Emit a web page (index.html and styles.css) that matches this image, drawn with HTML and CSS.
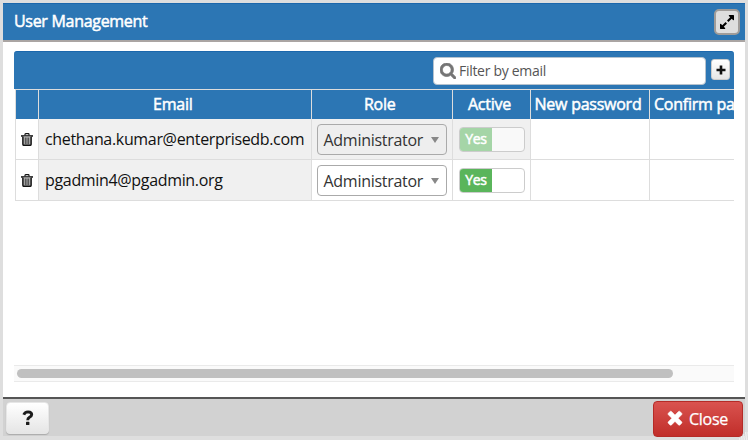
FILE: index.html
```html
<!DOCTYPE html>
<html lang="en">
<head>
<meta charset="utf-8">
<title>User Management</title>
<link rel="stylesheet" href="styles.css">
</head>
<body>
<svg width="0" height="0" class="defs">
  <symbol id="trash" viewBox="0 0 12 13"><path d="M4 2.200V1.400Q4 .7 4.700 .7H7.300Q8 .7 8 1.400V2.200" fill="none" stroke="#111" stroke-width="1.200"/><path d="M0 2.200H12V3.700H0Z" fill="#111"/><path d="M1.900 3.500V11.200Q1.900 12.300 3 12.300H9Q10.100 12.300 10.100 11.200V3.500" fill="#bbb" stroke="#111" stroke-width="1.500"/><path d="M4.300 4.500V11.200M6 4.500V11.200M7.700 4.500V11.200" stroke="#222" stroke-width=".8"/></symbol>
</svg>
<div class="dialog">
  <header class="titlebar">
    <h1>User Management</h1>
    <button class="expand" aria-label="Maximize"><svg viewBox="128 128 1536 1536" width="14" height="14"><path d="M883 1056q0 13-10 23l-332 332 144 144q19 19 19 45t-19 45-45 19H192q-26 0-45-19t-19-45v-448q0-26 19-45t45-19 45 19l144 144 332-332q10-10 23-10t23 10l114 114q10 10 10 23zm781-864v448q0 26-19 45t-45 19-45-19l-144-144-332 332q-10 10-23 10t-23-10L919 759q-10-10-10-23t10-23l332-332-144-144q-19-19-19-45t19-45 45-19h448q26 0 45 19t19 45z"/></svg></button>
  </header>
  <main>
    <div class="toolbar">
      <div class="search"><svg viewBox="0 0 1664 1664" width="16" height="16"><path fill="#757575" stroke="#757575" stroke-width="70" d="M1152 704q0-185-131.500-316.500T704 256 387.500 387.500 256 704t131.500 316.500T704 1152t316.500-131.500T1152 704zm512 832q0 52-38 90t-90 38q-54 0-90-38l-343-342q-179 124-399 124-143 0-273.500-55.500t-225-150-150-225T0 704t55.500-273.500 150-225 225-150T704 0t273.500 55.500 225 150 150 225T1408 704q0 220-124 399l343 343q37 37 37 90z"/></svg><span>Filter by email</span></div>
      <button class="add" aria-label="Add"><svg viewBox="0 0 10 10" width="10" height="10"><path d="M5 .5V9.500M.5 5H9.500" stroke="#111" stroke-width="2.600"/></svg></button>
    </div>
    <div class="grid">
      <div class="row head"><div></div><div><span>Email</span></div><div><span>Role</span></div><div><span>Active</span></div><div><span>New password</span></div><div class="last"><span>Confirm password</span></div></div>
      <div class="row">
        <div class="del"><svg width="12" height="13"><use href="#trash"/></svg></div>
        <div class="email dim"><span>chethana.kumar@enterprisedb.com</span></div>
        <div class="role dim"><div class="select off"><span>Administrator</span><i></i></div></div>
        <div class="active dim"><div class="toggle off"><b>Yes</b></div></div>
        <div></div><div></div>
      </div>
      <div class="row">
        <div class="del"><svg width="12" height="13"><use href="#trash"/></svg></div>
        <div class="email dim"><span>pgadmin4@pgadmin.org</span></div>
        <div class="role"><div class="select"><span>Administrator</span><i></i></div></div>
        <div class="active"><div class="toggle"><b>Yes</b></div></div>
        <div></div><div></div>
      </div>
    </div>
    <div class="scroll"><div></div></div>
  </main>
  <footer>
    <button class="help" aria-label="Help"><svg viewBox="0 0 12 16" width="12" height="16"><path d="M1.800 4.800Q2.800 1.900 6 1.900Q9.800 2.100 9.700 4.700Q9.600 6.200 7.500 7.300Q5.700 8.300 5.700 10.200" fill="none" stroke="#1c1c1c" stroke-width="2.900"/><rect x="4" y="11.800" width="3.400" height="3.200" rx=".6" fill="#1c1c1c"/></svg></button>
    <button class="close"><svg viewBox="302 302 1188 1188" width="14" height="14"><path transform="translate(0 -130)" fill="#fff" stroke="#fff" stroke-width="40" d="M1490 1322q0 40-28 68l-136 136q-28 28-68 28t-68-28l-294-294-294 294q-28 28-68 28t-68-28l-136-136q-28-28-28-68t28-68l294-294-294-294q-28-28-28-68t28-68l136-136q28-28 68-28t68 28l294 294 294-294q28-28 68-28t68 28l136 136q28 28 28 68t-28 68l-294 294 294 294q28 28 28 68z"/></svg><span>Close</span></button>
  </footer>
  <svg class="grip" width="9" height="9" viewBox="0 0 9 9"><path d="M0 8H9M2 6H9M4 4H9M6 2H9" stroke="#fff" stroke-width="1.200" stroke-dasharray="1.300 1"/></svg>
</div>
</body>
</html>
```
FILE: styles.css
```css
* { box-sizing: border-box; }
body { margin: 0; width: 748px; height: 440px; padding: 3px; overflow: hidden; background: #dedede; font-family: "Open Sans", sans-serif; color: #111; }
.defs { position: absolute; }
button { padding: 0; font: inherit; display: flex; align-items: center; justify-content: center; }
span { white-space: nowrap; }
.dialog { width: 742px; height: 434px; background: #fff; display: flex; flex-direction: column; }
.titlebar { height: 39px; flex: none; background: #2c76b4; border-top: 1px solid #1b67ac; border-bottom: 2px solid #aaa5a3; display: flex; justify-content: space-between; align-items: center; padding: 0 5px 0 11px; }
h1 { margin: 0 0 3px; font-size: 16px; font-weight: 400; line-height: 20px; color: #fff; letter-spacing: -.3px; -webkit-text-stroke: .5px #fff; }
.expand { width: 26px; height: 26px; border: 2px solid #a09c99; border-radius: 5px; background: #dedede; }
main { height: 355px; flex: none; padding: 9px 11px 0; display: flex; flex-direction: column; }
.toolbar { height: 38px; flex: none; background: #2c76b4; border-top: 1px solid #1b67ac; border-radius: 3px 3px 0 0; display: flex; justify-content: flex-end; align-items: flex-start; padding: 5px 4px 0 0; gap: 5px; }
.search { width: 273px; height: 28px; border: 1px solid #b5c2ce; border-radius: 4px; background: #fff; display: flex; align-items: center; gap: 3px; padding-left: 6px; font-size: 14px; color: #555; letter-spacing: -.3px; }
.search span { margin-top: -1px; }
.add { width: 19px; height: 21px; margin-top: 2px; border: 1px solid #ccc; border-radius: 3px; background: linear-gradient(#fff, #e6e6e6); }
.grid { margin-left: 1px; border-left: 1px solid #ddd; overflow: hidden; }
.row { display: grid; grid-template-columns: 23px 272.5px 141.5px 78px 119px 150px; height: 41px; border-bottom: 1px solid #ddd; }
.row > div { border-right: 1px solid #ddd; display: flex; align-items: center; min-width: 0; }
.head { height: 30px; border-top: 1px solid #ddd; border-bottom: 0; background: #2c76b4; color: #fff; font-size: 16px; letter-spacing: -.25px; -webkit-text-stroke: .5px #fff; }
.head > div { justify-content: center; }
.head span { margin: -2px 4px 0 0; }
.head > .last { justify-content: flex-start; padding-left: 4px; }
.del { justify-content: center; }
.row .dim { background: #f0f0f0; }
.row > .email { padding-left: 6px; font-size: 16px; letter-spacing: -.33px; }
.row > .role { padding-left: 5px; }
.select { width: 130px; height: 31px; border: 1px solid #aaa; border-radius: 4px; background: #fff; display: flex; align-items: center; justify-content: space-between; padding: 2px 7px 0 6px; font-size: 16px; letter-spacing: -.28px; color: #333; }
.select.off { background: #eee; }
.select i { border: 4.5px solid transparent; border-top: 6px solid #888; border-bottom: 0; margin-top: -1px; }
.row > .active { padding-left: 6px; }
.toggle { width: 66px; height: 25px; border: 1px solid #ccc; border-radius: 4px; overflow: hidden; background: #fff; }
.toggle b { display: block; width: 32px; height: 23px; line-height: 22px; text-align: center; background: #5ab55b; color: #fff; font-size: 14px; font-weight: 400; letter-spacing: -.3px; -webkit-text-stroke: .5px #fff; }
.toggle.off { background: #f9f9f9; }
.toggle.off b { background: #a5d5a7; }
.scroll { margin-top: auto; margin-bottom: 15px; height: 17px; border: solid #eaeaea; border-width: 1px 0; background: #fafafa; padding: 3px; flex: none; }
.scroll div { width: 656px; height: 9px; border-radius: 5px; background: #c0c0c0; }
footer { height: 40px; flex: none; background: #d2d2d2; border-top: 2px solid #555; border-bottom: 1px solid #dedede; display: flex; justify-content: space-between; padding: 2px 2px 0 3px; }
.help { width: 43px; height: 32px; margin-top: 1px; border: 1px solid #e6e6e6; border-radius: 4px; background: linear-gradient(#fff, #e5e5e5); box-shadow: 0 1px 1px #aaa; }
.close { width: 90px; height: 36px; border: 1px solid #b52b27; border-radius: 4px; background: linear-gradient(#d9534f, #c12e2a); color: #fff; font-size: 16px; letter-spacing: -.3px; gap: 7px; }
.close span { -webkit-text-stroke: .25px #fff; }
.close svg { overflow: visible; }
.grip { position: absolute; right: 0; bottom: 0; }
```
